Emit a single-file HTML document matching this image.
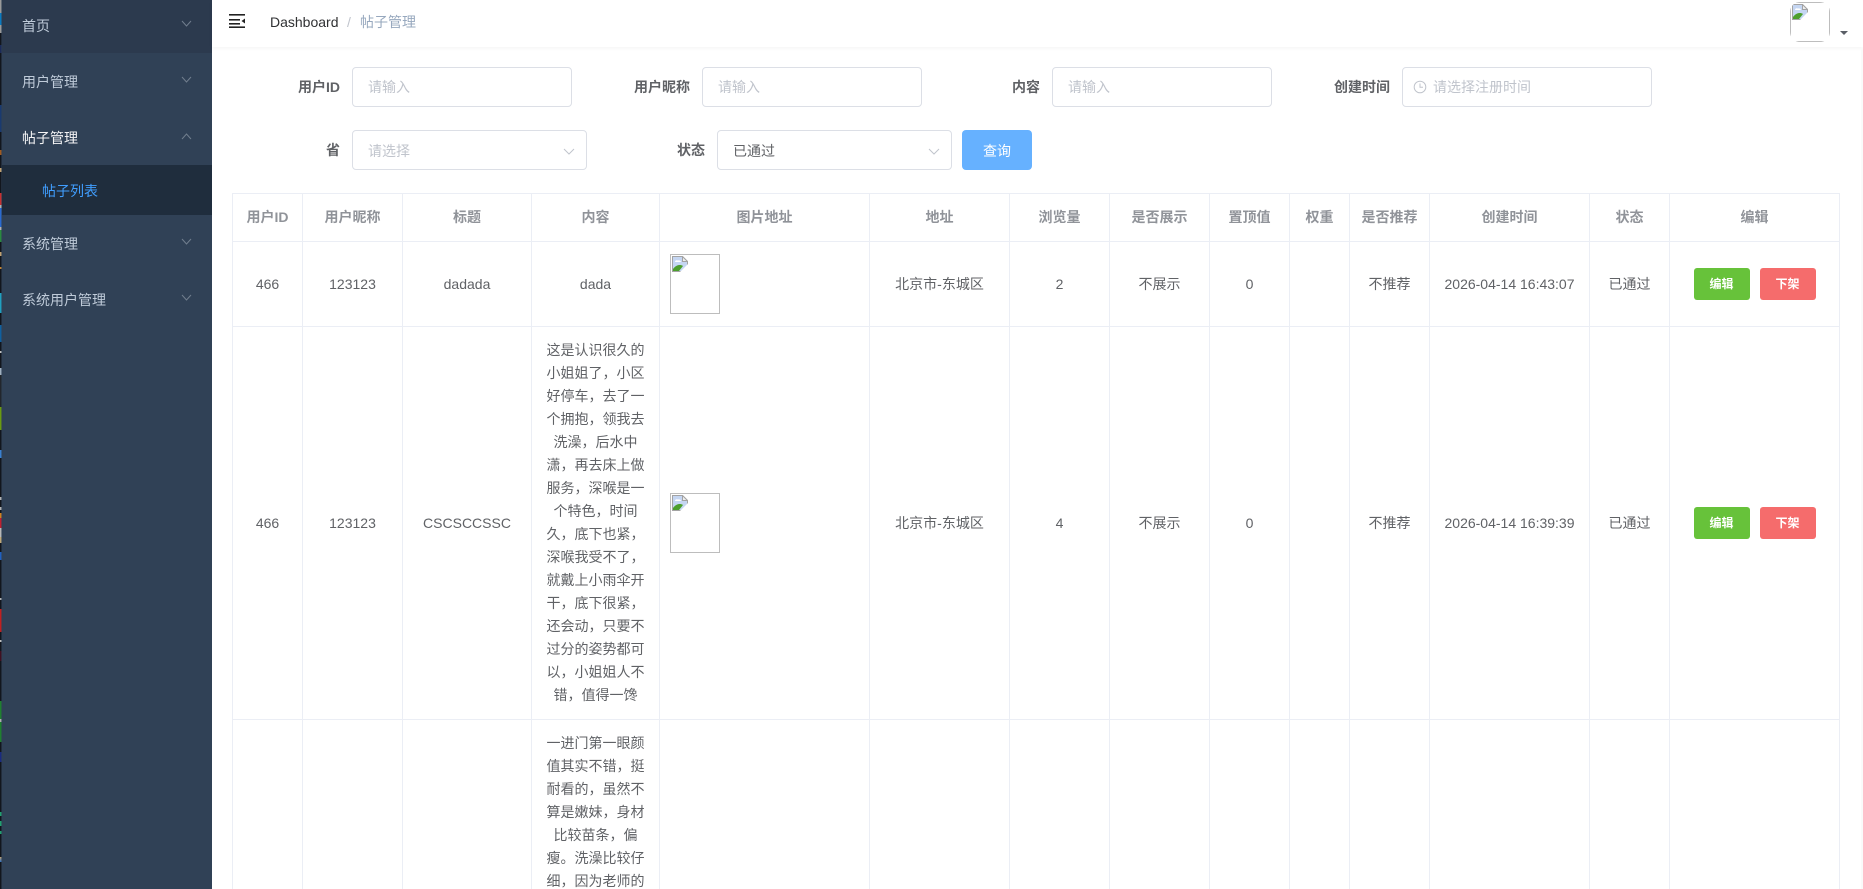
<!DOCTYPE html>
<html lang="zh"><head><meta charset="utf-8"><title>帖子管理</title>
<style>
*{box-sizing:border-box}
html,body{margin:0;padding:0;width:1863px;height:889px;overflow:hidden;background:#fff}
body{position:relative;font-family:"Liberation Sans","Noto Sans CJK SC",sans-serif;font-size:14px;color:#606266}
.a{position:absolute}
.side{left:0;top:0;width:212px;height:889px;background:#304156}
.mi{position:absolute;left:0;width:212px;height:56px;line-height:58px;padding-left:22px;color:#bfcbd9;white-space:nowrap}
.ch{position:absolute;left:181px;width:11px;height:7px}
.hd{left:212px;top:0;width:1651px;height:47px;background:#fff;box-shadow:0 1px 4px rgba(0,21,41,.05)}
.lb{position:absolute;font-weight:700;text-align:right;width:100px;height:40px;line-height:40px;white-space:nowrap}
.ip{position:absolute;height:40px;border:1px solid #dcdfe6;border-radius:4px;line-height:39px;padding-left:15px;color:#c0c4cc;background:#fff;white-space:nowrap}
.wrap{position:absolute;left:232px;top:193px;width:1608px;height:696px;overflow:hidden}
table{position:absolute;left:0;top:0;width:1608px;table-layout:fixed;border-collapse:separate;border-spacing:0;border-left:1px solid #ebeef5;border-top:1px solid #ebeef5}
td,th{border-right:1px solid #ebeef5;border-bottom:1px solid #ebeef5;text-align:center;vertical-align:middle;padding:0;line-height:23px;font-size:14px;overflow:hidden;white-space:nowrap}
th{color:#909399;font-weight:700;height:48px}
.r1 td{height:85px}.r2 td{height:393px}.r3 td{height:185px;vertical-align:top;padding-top:12px}
.im{display:block;position:relative;width:50px;height:60px;margin-left:10px;border:1px solid #bdbdbd;text-align:left}
.im svg{position:absolute;left:1px;top:1px}
.b{display:inline-block;width:56px;height:32px;line-height:32px;border-radius:3px;color:#fff;font-size:12px;font-weight:700;vertical-align:middle}
.g{background:#67c23a}.rd{background:#f56c6c;margin-left:10px}
</style></head><body>

<div class="a side">
<div class="mi" style="top:-3px;height:56px;background:#2c3a4e">首页</div>
<div class="mi" style="top:53px">用户管理</div>
<div class="mi" style="top:109px;color:#f4f4f5">帖子管理</div>
<div class="mi" style="top:165px;height:50px;line-height:52px;padding-left:42px;background:#1f2d3d;color:#409eff">帖子列表</div>
<div class="mi" style="top:215px">系统管理</div>
<div class="mi" style="top:271px">系统用户管理</div>
<svg class="ch" style="top:20px" viewBox="0 0 11 7"><path d="M1 1L5.500 6L10 1" fill="none" stroke="#717e8e" stroke-width="1"/></svg>
<svg class="ch" style="top:76px" viewBox="0 0 11 7"><path d="M1 1L5.500 6L10 1" fill="none" stroke="#717e8e" stroke-width="1"/></svg>
<svg class="ch" style="top:133px" viewBox="0 0 11 7"><path d="M1 6L5.500 1L10 6" fill="none" stroke="#717e8e" stroke-width="1"/></svg>
<svg class="ch" style="top:238px" viewBox="0 0 11 7"><path d="M1 1L5.500 6L10 1" fill="none" stroke="#717e8e" stroke-width="1"/></svg>
<svg class="ch" style="top:294px" viewBox="0 0 11 7"><path d="M1 1L5.500 6L10 1" fill="none" stroke="#717e8e" stroke-width="1"/></svg>
</div>

<div class="a" style="left:0;top:0;width:2px;height:889px;background:linear-gradient(to bottom,
#9a9a9a 0,#9a9a9a 13px,#0a7ac0 13px,#0a7ac0 25px,#9a9a9a 25px,#9a9a9a 33px,#12161d 33px,#12161d 45px,#1c2a58 45px,#1c2a58 53px,#12161d 53px,#12161d 105px,
#1a3a70 105px,#1a3a70 132px,#12161d 132px,#12161d 150px,#a05a20 150px,#a05a20 155px,#12161d 155px,#12161d 168px,#c0a070 168px,#c0a070 172px,#12161d 172px,#12161d 193px,
#c83030 193px,#c83030 205px,#b0b0b0 205px,#b0b0b0 208px,#2a6ad0 208px,#2a6ad0 227px,#b0b0b0 227px,#b0b0b0 230px,#2a8a40 230px,#2a8a40 242px,#12161d 242px,#12161d 252px,
#c0a070 252px,#c0a070 256px,#12161d 256px,#12161d 267px,#c08030 267px,#c08030 269px,#12161d 269px,#12161d 293px,#20a0c0 293px,#20a0c0 313px,#12161d 313px,#12161d 325px,
#1060a0 325px,#1060a0 342px,#12161d 342px,#12161d 351px,#c0c0c0 351px,#c0c0c0 353px,#12161d 353px,#12161d 368px,#a0b0c0 368px,#a0b0c0 375px,#22262c 375px,#22262c 407px,
#6a9a10 407px,#6a9a10 430px,#12161d 430px,#12161d 450px,#3a80d0 450px,#3a80d0 458px,#12161d 458px,#12161d 497px,#b0b0b0 497px,#b0b0b0 500px,#12161d 500px,#12161d 507px,
#b0b0b0 507px,#b0b0b0 510px,#12161d 510px,#12161d 513px,#d08020 513px,#d08020 518px,#c02030 518px,#c02030 528px,#b8b8b8 528px,#b8b8b8 537px,#c0a878 537px,#c0a878 543px,
#12161d 543px,#12161d 552px,#2060c0 552px,#2060c0 560px,#12161d 560px,#12161d 598px,#b0b0b0 598px,#b0b0b0 600px,#12161d 600px,#12161d 609px,#c02020 609px,#c02020 632px,
#12161d 632px,#12161d 640px,#c0c0c0 640px,#c0c0c0 642px,#12161d 642px,#12161d 651px,#401020 651px,#401020 661px,#12161d 661px,#12161d 701px,#208030 701px,#208030 719px,
#b0b0b0 719px,#b0b0b0 722px,#208030 722px,#208030 742px,#12161d 742px,#12161d 752px,#1a2a80 752px,#1a2a80 762px,#12161d 762px,#12161d 812px,#20a070 812px,#20a070 816px,
#12161d 816px,#12161d 821px,#20a070 821px,#20a070 826px,#12161d 826px,#12161d 831px,#20a070 831px,#20a070 834px,#12161d 834px,#12161d 857px,#c0a070 857px,#3070c0 862px,#12161d 862px,#12161d 889px)"></div>
<div class="a" style="left:1px;top:0;width:1px;height:889px;background:rgba(48,65,86,.55)"></div>

<div class="a hd"></div>
<svg class="a" style="left:229px;top:13px" width="16" height="15" viewBox="0 0 16 15">
<rect x="0" y="1" width="16" height="1.600" fill="#222"/>
<rect x="0" y="6" width="11" height="1.600" fill="#222"/>
<rect x="0" y="10" width="11" height="1.600" fill="#222"/>
<rect x="0" y="13.400" width="16" height="1.600" fill="#222"/>
<path d="M16 5.500V10.500L12.500 8Z" fill="#222"/>
</svg>
<div class="a" style="left:270px;top:11px;line-height:23px;color:#303133;white-space:nowrap">Dashboard</div>
<div class="a" style="left:347px;top:11px;line-height:23px;color:#c0c4cc">/</div>
<div class="a" style="left:360px;top:11px;line-height:23px;color:#97a8be;white-space:nowrap">帖子管理</div>

<div class="a" style="left:1790px;top:2px;width:40px;height:40px;border-radius:10px;overflow:hidden">
<div style="width:40px;height:40px;border:1px solid #bdbdbd"></div>
<svg style="position:absolute;left:2px;top:2px" width="16" height="16" viewBox="0 0 16 16">
<path d="M.5.5H10.500L15.500 5.500V10L12 15.500H.5Z" fill="#c5d6f2" stroke="#a3a3a3"/>
<path d="M3 6c0-2 2-2 3-1.500 1-.5 3 0 3 1.500z" fill="#fff"/>
<path d="M1 15V13C4 9 8 8 11 10L7 15Z" fill="#4c9f2c"/>
<path d="M10.500.5V5.500H15.500Z" fill="#eee" stroke="#a3a3a3"/>
<path d="M8 16L16 8V16Z" fill="#fff"/>
</svg>
</div>
<div class="a" style="left:1840px;top:31px;width:0;height:0;border:4px solid transparent;border-bottom:0;border-top-color:#5a5e66"></div>

<div class="lb" style="left:240px;top:67px">用户ID</div>
<div class="ip" style="left:352px;top:67px;width:220px">请输入</div>
<div class="lb" style="left:590px;top:67px">用户昵称</div>
<div class="ip" style="left:702px;top:67px;width:220px">请输入</div>
<div class="lb" style="left:940px;top:67px">内容</div>
<div class="ip" style="left:1052px;top:67px;width:220px">请输入</div>
<div class="lb" style="left:1290px;top:67px">创建时间</div>
<div class="ip" style="left:1402px;top:67px;width:250px;padding-left:30px">请选择注册时间</div>
<svg class="a" style="left:1413px;top:80px" width="14" height="14" viewBox="0 0 14 14"><circle cx="7" cy="7" r="5.800" fill="none" stroke="#c0c4cc"/><path d="M7 3.500V7.300H10" fill="none" stroke="#c0c4cc"/></svg>

<div class="lb" style="left:240px;top:130px">省</div>
<div class="ip" style="left:352px;top:130px;width:235px;line-height:41px">请选择</div>
<svg class="a" style="left:563px;top:148px" width="12" height="7" viewBox="0 0 12 7"><path d="M1 1L6 6L11 1" fill="none" stroke="#c0c4cc"/></svg>
<div class="lb" style="left:605px;top:130px">状态</div>
<div class="ip" style="left:717px;top:130px;width:235px;color:#606266;line-height:41px">已通过</div>
<svg class="a" style="left:928px;top:148px" width="12" height="7" viewBox="0 0 12 7"><path d="M1 1L6 6L11 1" fill="none" stroke="#c0c4cc"/></svg>
<div class="a" style="left:962px;top:130px;width:70px;height:40px;line-height:42px;background:#66b1ff;border-radius:4px;color:#fff;text-align:center">查询</div>

<div class="wrap">
<table>
<colgroup><col style="width:70px"><col style="width:100px"><col style="width:129px"><col style="width:128px"><col style="width:210px"><col style="width:140px"><col style="width:100px"><col style="width:100px"><col style="width:80px"><col style="width:60px"><col style="width:80px"><col style="width:160px"><col style="width:80px"><col style="width:170px"></colgroup>
<tr><th>用户ID</th><th>用户昵称</th><th>标题</th><th>内容</th><th>图片地址</th><th>地址</th><th>浏览量</th><th>是否展示</th><th>置顶值</th><th>权重</th><th>是否推荐</th><th>创建时间</th><th>状态</th><th>编辑</th></tr>
<tr class="r1"><td>466</td><td>123123</td><td>dadada</td><td>dada</td>
<td><span class="im"><svg width="16" height="16" viewBox="0 0 16 16"><path d="M.5.5H10.500L15.500 5.500V10L12 15.500H.5Z" fill="#c5d6f2" stroke="#a3a3a3"/><path d="M3 6c0-2 2-2 3-1.500 1-.5 3 0 3 1.500z" fill="#fff"/><path d="M1 15V13C4 9 8 8 11 10L7 15Z" fill="#4c9f2c"/><path d="M10.500.5V5.500H15.500Z" fill="#eee" stroke="#a3a3a3"/><path d="M8 16L16 8V16Z" fill="#fff"/></svg></span></td>
<td>北京市-东城区</td><td>2</td><td>不展示</td><td>0</td><td></td><td>不推荐</td><td>2026-04-14 16:43:07</td><td>已通过</td><td><span class="b g">编辑</span><span class="b rd">下架</span></td></tr>
<tr class="r2"><td>466</td><td>123123</td><td>CSCSCCSSC</td>
<td>这是认识很久的<br>小姐姐了，小区<br>好停车，去了一<br>个拥抱，领我去<br>洗澡，后水中<br>潇，再去床上做<br>服务，深喉是一<br>个特色，时间<br>久，底下也紧，<br>深喉我受不了，<br>就戴上小雨伞开<br>干，底下很紧，<br>还会动，只要不<br>过分的姿势都可<br>以，小姐姐人不<br>错，值得一馋</td>
<td><span class="im"><svg width="16" height="16" viewBox="0 0 16 16"><path d="M.5.5H10.500L15.500 5.500V10L12 15.500H.5Z" fill="#c5d6f2" stroke="#a3a3a3"/><path d="M3 6c0-2 2-2 3-1.500 1-.5 3 0 3 1.500z" fill="#fff"/><path d="M1 15V13C4 9 8 8 11 10L7 15Z" fill="#4c9f2c"/><path d="M10.500.5V5.500H15.500Z" fill="#eee" stroke="#a3a3a3"/><path d="M8 16L16 8V16Z" fill="#fff"/></svg></span></td>
<td>北京市-东城区</td><td>4</td><td>不展示</td><td>0</td><td></td><td>不推荐</td><td>2026-04-14 16:39:39</td><td>已通过</td><td><span class="b g">编辑</span><span class="b rd">下架</span></td></tr>
<tr class="r3"><td></td><td></td><td></td><td>一进门第一眼颜<br>值其实不错，挺<br>耐看的，虽然不<br>算是嫩妹，身材<br>比较苗条，偏<br>瘦。洗澡比较仔<br>细，因为老师的</td><td></td><td></td><td></td><td></td><td></td><td></td><td></td><td></td><td></td><td></td></tr>
</table>
</div>
<div class="a" style="left:1861px;top:48px;width:2px;height:841px;background:#fafafa"></div>
</body></html>
